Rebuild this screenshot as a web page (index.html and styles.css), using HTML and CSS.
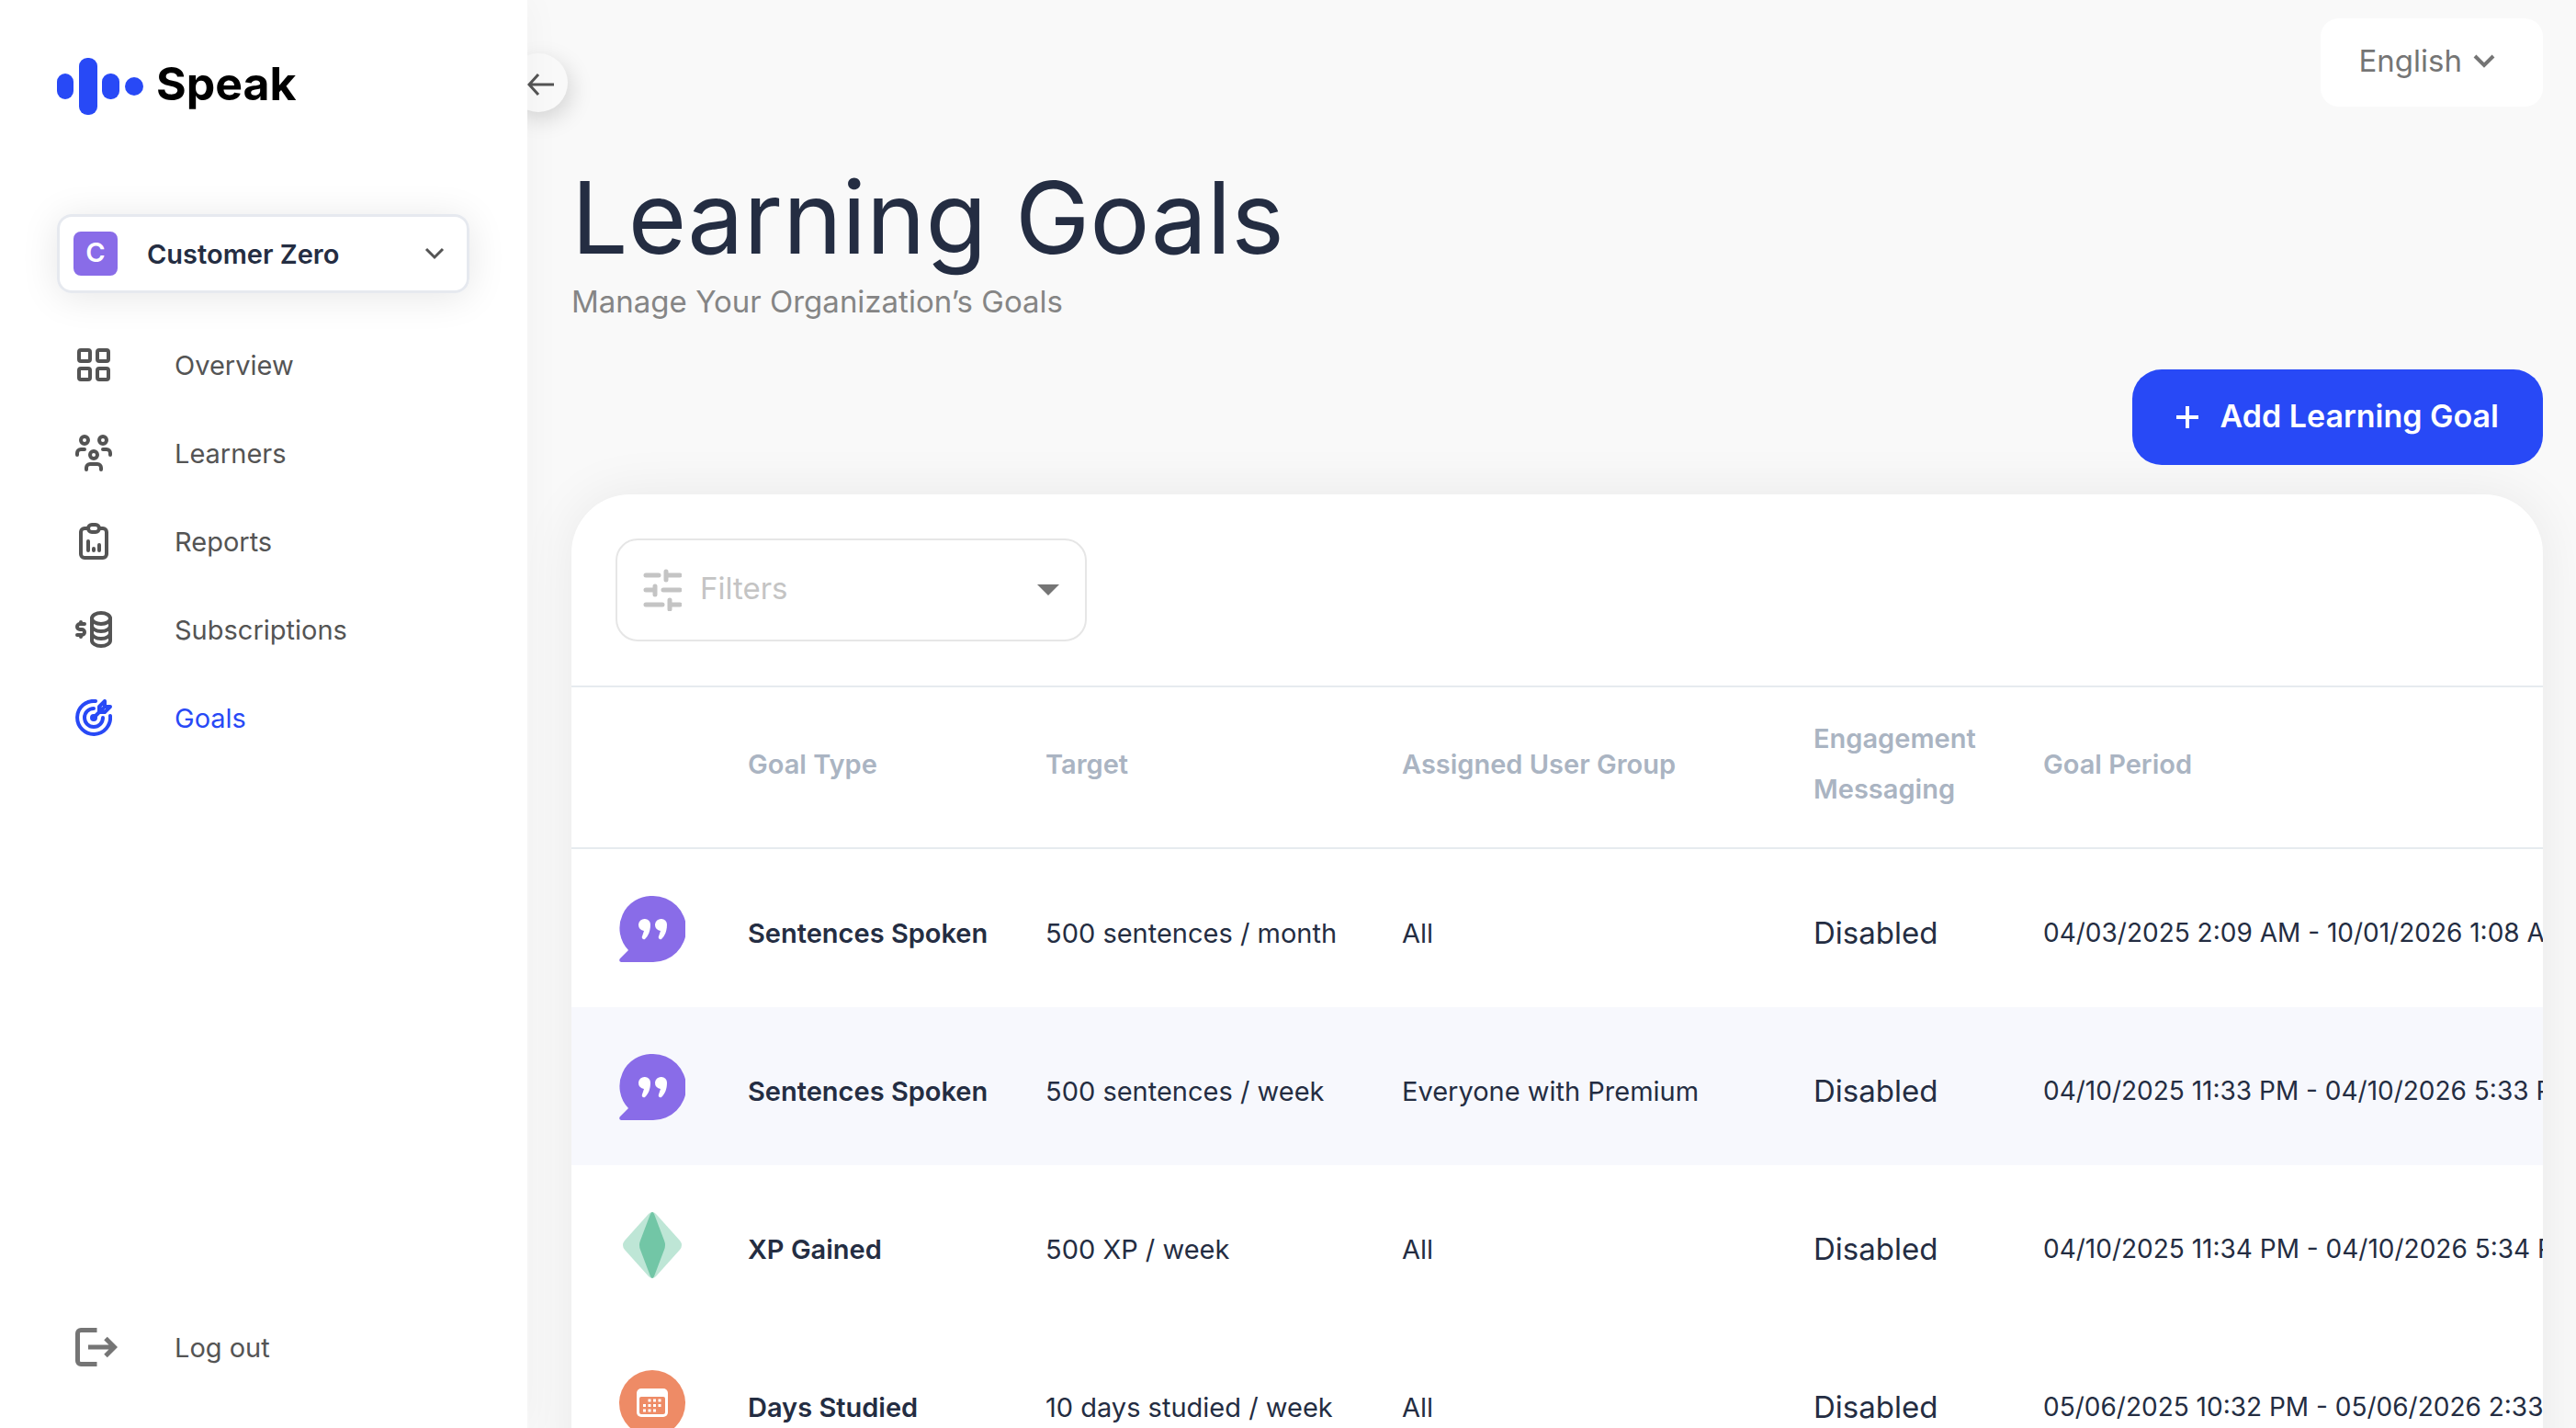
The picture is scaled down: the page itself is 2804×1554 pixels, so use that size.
FILE: index.html
```
<!DOCTYPE html>
<html lang="en">
<head>
    <meta charset="utf-8">
    <title>Learning Goals</title>
    <link rel="stylesheet" href="styles.css">
</head>
<body>
    <aside class="sidebar">
        <a class="logo" href="#" aria-label="Speak">
            <svg width="94" height="62" viewBox="0 0 94 62" fill="#2849f6">
                <rect x="0" y="17" width="18" height="28" rx="9"/>
                <rect x="24" y="0" width="20" height="62" rx="9"/>
                <rect x="49" y="17" width="19" height="28" rx="9"/>
                <ellipse cx="84" cy="31" rx="10" ry="10"/>
            </svg>
            <span>Speak</span>
        </a>
        <div class="org">
            <span class="org-badge">C</span>
            <select class="org-select" aria-label="Organization">
                <option>Customer Zero</option>
            </select>
            <svg class="org-arrow" width="22" height="14" viewBox="0 0 22 14" fill="none" stroke="#545454" stroke-width="3"><path d="M2 2l9 9 9-9"/></svg>
        </div>
        <nav class="nav">
            <a href="#">
                <svg width="40" height="40" viewBox="0 0 40 40"><rect x="4" y="4" width="12" height="12" rx="2"/><rect x="24" y="4" width="12" height="12" rx="2"/><rect x="4" y="24" width="12" height="12" rx="2"/><rect x="24" y="24" width="12" height="12" rx="2"/></svg>
                Overview
            </a>
            <a href="#">
                <svg width="40" height="40" viewBox="0 0 40 40"><circle cx="10" cy="6" r="4"/><circle cx="30" cy="6" r="4"/><circle cx="20" cy="22" r="4"/><path d="M2 22v-2a4 4 0 0 1 4-4h4M38 22v-2a4 4 0 0 0-4-4h-4M12 38v-2a4 4 0 0 1 4-4h8a4 4 0 0 1 4 4v2"/></svg>
                Learners
            </a>
            <a href="#">
                <svg width="40" height="40" viewBox="0 0 40 40"><path d="M14 6h-4a4 4 0 0 0-4 4v24a4 4 0 0 0 4 4h20a4 4 0 0 0 4-4V10a4 4 0 0 0-4-4h-4"/><rect x="14" y="2" width="12" height="8" rx="4"/><path d="M14 20v10M20 28v2M26 24v6"/></svg>
                Reports
            </a>
            <a href="#">
                <svg width="40" height="40" viewBox="0 0 40 40"><ellipse cx="28" cy="8" rx="10" ry="6"/><path d="M18 8v24c0 3 4 6 10 6s10-3 10-6V8M18 16c0 3 4 6 10 6s10-3 10-6M18 24c0 3 4 6 10 6s10-3 10-6M10 14H5a3 3 0 0 0 0 6h2a3 3 0 0 1 0 6H2M6 12v2M6 26v2"/></svg>
                Subscriptions
            </a>
            <a class="active" href="#">
                <svg width="40" height="40" viewBox="0 0 40 40"><path d="M22 2a18 18 0 1 0 16 16M20 10a10 10 0 1 0 10 10M20 20L30 10M26 8l6-6v6h6l-6 6h-6z"/><circle cx="20" cy="20" r="2"/></svg>
                Goals
            </a>
        </nav>
        <a class="logout" href="#">
            <svg width="46" height="42" viewBox="0 0 46 42" fill="none" stroke="#757575" stroke-width="5"><path d="M23.500 2.500H6a3.500 3.500 0 0 0-3.500 3.500v30a3.500 3.500 0 0 0 3.500 3.500h17.500M14 21h28M33 11.500l9.500 9.500-9.500 9.500"/></svg>
            Log out
        </a>
    </aside>
    <button class="collapse" aria-label="Collapse sidebar">
        <svg width="30" height="26" viewBox="0 0 30 26" fill="none" stroke="#545454" stroke-width="3"><path d="M29 13H2M12 2L2 13l10 11"/></svg>
    </button>
    <main class="content">
        <div class="topbar">
            <label class="language">
                <select aria-label="Language">
                    <option>English</option>
                </select>
                <svg width="24" height="16" viewBox="0 0 24 16" fill="none" stroke="#757575" stroke-width="4"><path d="M2 3l10 10L22 3"/></svg>
            </label>
        </div>
        <h1>Learning Goals</h1>
        <p class="subtitle">Manage Your Organization’s Goals</p>
        <div class="actions">
            <button class="add">
                <svg width="24" height="24" viewBox="0 0 24 24" stroke="#fff" stroke-width="4"><path d="M0 12h24M12 0v24"/></svg>
                <span>Add Learning Goal</span>
            </button>
        </div>
        <section class="card">
            <div class="filter-bar">
                <label class="filter">
                    <svg width="42" height="46" viewBox="0 0 42 46" fill="none" stroke="#c4c4c4" stroke-width="5" stroke-linecap="round"><path d="M3 7h14M27 7h13M25 3v9M3 23h10M22 23h18M13 19v9M3 39h18M30 39h10M29 34v10"/></svg>
                    <select aria-label="Filters">
                        <option>Filters</option>
                    </select>
                    <svg width="24" height="12" viewBox="0 0 24 12" fill="#757575"><path d="M0 0h24L12 12z"/></svg>
                </label>
            </div>
            <table class="goals">
                <colgroup>
                    <col class="col-icon">
                    <col class="col-type">
                    <col class="col-target">
                    <col class="col-group">
                    <col class="col-messaging">
                    <col class="col-period">
                </colgroup>
                <thead>
                    <tr>
                        <th></th>
                        <th>Goal Type</th>
                        <th>Target</th>
                        <th>Assigned User Group</th>
                        <th>Engagement<br>Messaging</th>
                        <th>Goal Period</th>
                    </tr>
                </thead>
                <tbody>
                    <tr>
                        <td><svg class="goal-icon" viewBox="0 0 72 72"><use href="#quote"/></svg></td>
                        <td class="type">Sentences Spoken</td>
                        <td>500 sentences / month</td>
                        <td>All</td>
                        <td class="messaging">Disabled</td>
                        <td class="period">04/03/2025 2:09 AM - 10/01/2026 1:08 AM</td>
                    </tr>
                    <tr class="highlight">
                        <td><svg class="goal-icon" viewBox="0 0 72 72"><use href="#quote"/></svg></td>
                        <td class="type">Sentences Spoken</td>
                        <td>500 sentences / week</td>
                        <td>Everyone with Premium</td>
                        <td class="messaging">Disabled</td>
                        <td class="period">04/10/2025 11:33 PM - 04/10/2026 5:33 PM</td>
                    </tr>
                    <tr>
                        <td><svg class="goal-icon" viewBox="0 0 72 72"><path fill="#bee6d6" d="M32 2Q36-2 40 2L66 31Q70 36 66 41L40 70Q36 74 32 70L6 41Q2 36 6 31Z"/><path fill="#72c6a6" d="M34 2Q36-2 38 2L49 31Q51 36 49 41L38 70Q36 74 34 70L23 41Q21 36 23 31Z"/></svg></td>
                        <td class="type">XP Gained</td>
                        <td>500 XP / week</td>
                        <td>All</td>
                        <td class="messaging">Disabled</td>
                        <td class="period">04/10/2025 11:34 PM - 04/10/2026 5:34 PM</td>
                    </tr>
                    <tr>
                        <td><svg class="goal-icon" viewBox="0 0 72 72"><circle cx="36" cy="36" r="36" fill="#ee8b66"/><rect x="19" y="20" width="34" height="31" rx="5" fill="#fff"/><rect x="22" y="29" width="28" height="19" rx="2" fill="#ee8b66"/><path d="M33 33h.01M38.500 33h.01M44 33h.01M27.500 38.500h.01M33 38.500h.01M38.500 38.500h.01M44 38.500h.01M27.500 44h.01M33 44h.01M38.500 44h.01" stroke="#fff" stroke-width="3" stroke-linecap="square"/></svg></td>
                        <td class="type">Days Studied</td>
                        <td>10 days studied / week</td>
                        <td>All</td>
                        <td class="messaging">Disabled</td>
                        <td class="period">05/06/2025 10:32 PM - 05/06/2026 2:33 PM</td>
                    </tr>
                </tbody>
            </table>
        </section>
    </main>
    <svg class="symbols" width="0" height="0">
        <symbol id="quote" viewBox="0 0 72 72">
            <path fill="#896ce8" d="M37 0a35 35 0 0 1 0 72H2Q-1 71 1 68L10 59A35 35 0 0 1 37 0Z"/>
            <path fill="#fff" d="M28 25a6 6 0 0 1 6 6c0 7-2 12-6 16-2 1-4-1-3-3l2-6a6 6 0 0 1 1-13zM46 25a6 6 0 0 1 6 6c0 7-2 12-6 16-2 1-4-1-3-3l2-6a6 6 0 0 1 1-13z"/>
        </symbol>
    </svg>
</body>
</html>
```
FILE: styles.css
```
* {
    box-sizing: border-box;
}
body {
    margin: 0;
    display: flex;
    height: 100vh;
    overflow: hidden;
    font-family: Inter, sans-serif;
    font-size: 29px;
    color: #242d42;
    background: #f9f9f9;
}
a {
    color: inherit;
    text-decoration: none;
}
button, select {
    font: inherit;
    color: inherit;
    border: none;
    background: none;
    padding: 0;
}
select {
    appearance: none;
}
svg {
    flex-shrink: 0;
}
.sidebar {
    width: 574px;
    flex-shrink: 0;
    display: flex;
    flex-direction: column;
    padding: 60px 63px 54px 62px;
    background: #fff;
    box-shadow: 0 0 40px rgba(0, 0, 0, 0.04);
    z-index: 2;
}
.logo {
    display: flex;
    align-items: center;
    gap: 14px;
    height: 68px;
    font-size: 50px;
    font-weight: 700;
    color: #000;
}
.logo span {
    padding-bottom: 6px;
}
.org {
    display: flex;
    align-items: center;
    height: 86px;
    margin-top: 105px;
    padding: 0 24px 0 15px;
    border: 3px solid #e6e9ef;
    border-radius: 16px;
    box-shadow: 0 4px 40px rgba(0, 0, 0, 0.1);
}
.org-badge {
    width: 48px;
    height: 48px;
    border-radius: 8px;
    background: #896ce8;
    color: #fff;
    font-weight: 600;
    line-height: 46px;
    text-align: center;
}
.org-select {
    flex: 1;
    margin-left: 32px;
    font-weight: 600;
}
.nav {
    display: flex;
    flex-direction: column;
    margin-top: 30px;
    flex: 1;
}
.nav a, .logout {
    display: flex;
    align-items: center;
    gap: 68px;
    height: 96px;
    padding-left: 20px;
    color: #545454;
}
.nav svg {
    fill: none;
    stroke: currentColor;
    stroke-width: 4;
    stroke-linecap: round;
    stroke-linejoin: round;
}
.nav .active {
    color: #2849f6;
}
.logout {
    height: 68px;
    gap: 62px;
}
.collapse {
    width: 64px;
    height: 64px;
    margin: 58px -44px 0 -20px;
    padding: 4px 0 0 20px;
    flex-shrink: 0;
    border-radius: 32px;
    background: #f9f9f9;
    box-shadow: 4px 8px 24px rgba(0, 0, 0, 0.15);
    display: flex;
    align-items: center;
    z-index: 1;
}
.content {
    flex: 1;
    min-width: 0;
    padding: 20px 36px 0 48px;
}
.topbar, .actions {
    display: flex;
    justify-content: flex-end;
}
.language {
    display: flex;
    align-items: center;
    gap: 12px;
    height: 96px;
    padding: 0 52px 4px 42px;
    border-radius: 20px;
    background: #fff;
    color: #757575;
    font-size: 33px;
}
.language select {
    field-sizing: content;
}
h1 {
    margin: 52px 0 0;
    font-size: 109px;
    font-weight: 400;
    line-height: 136px;
}
.subtitle {
    margin: 0;
    font-size: 33px;
    line-height: 48px;
    color: #858585;
}
.add {
    display: flex;
    align-items: center;
    gap: 24px;
    height: 104px;
    margin: 50px 0 32px;
    padding: 0 48px;
    border-radius: 32px;
    background: #2849f6;
    color: #fff;
    font-size: 34px;
    font-weight: 600;
}
.add span {
    padding-bottom: 4px;
}
.card {
    border-radius: 64px 64px 0 0;
    background: #fff;
    overflow: hidden;
    box-shadow: 0 0 60px rgba(0, 0, 0, 0.07);
}
.filter-bar {
    padding: 48px;
    border-bottom: 2px solid #e6ebef;
}
.filter {
    display: flex;
    align-items: center;
    width: 513px;
    height: 112px;
    padding: 0 28px;
    border: 2px solid #e6e6e6;
    border-radius: 24px;
    font-size: 33px;
    color: #c4c4c4;
}
.filter select {
    flex: 1;
    margin-left: 20px;
    padding-bottom: 4px;
}
.goals {
    width: 2300px;
    table-layout: fixed;
    border-spacing: 0;
    text-align: left;
    white-space: nowrap;
}
.goals th {
    height: 176px;
    padding: 0 0 8px;
    line-height: 55px;
    font-weight: 600;
    color: #aab4c2;
    border-bottom: 2px solid #e6ebef;
}
.goals td {
    height: 172px;
    padding: 10px 0 0;
}
.goals td:first-child {
    padding: 2px 0 0 52px;
}
.goals .highlight {
    background: #f7f8fd;
}
.goals .type {
    font-weight: 600;
}
.goals .messaging {
    font-size: 33px;
}
.goals .period {
    font-size: 28px;
}
.goal-icon {
    display: block;
    width: 72px;
    height: 72px;
}
.col-icon {
    width: 192px;
}
.col-type {
    width: 324px;
}
.col-target {
    width: 388px;
}
.col-group {
    width: 448px;
}
.col-messaging {
    width: 250px;
}
.symbols {
    position: absolute;
}
```
